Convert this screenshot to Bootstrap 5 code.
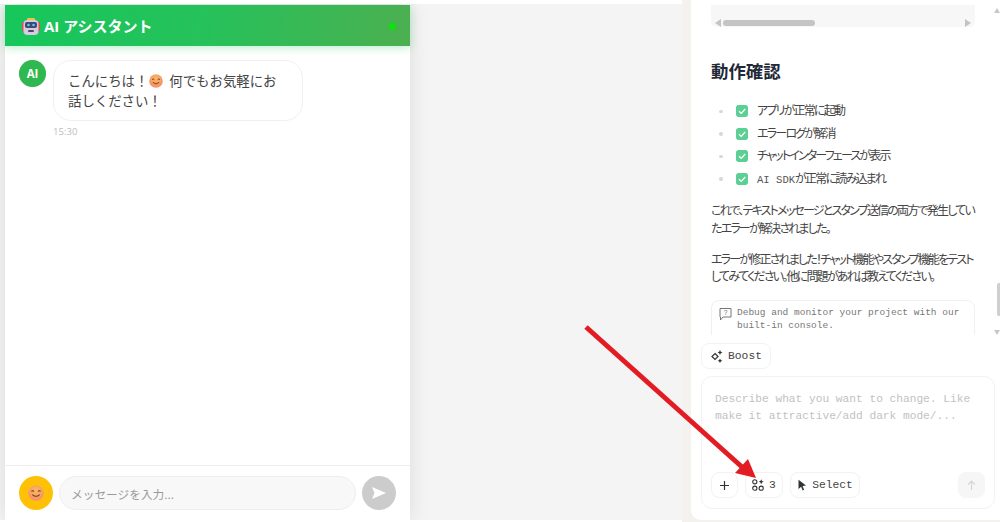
<!DOCTYPE html>
<html lang="ja">
<head>
<meta charset="utf-8">
<title>AI アシスタント</title>
<link href="https://cdn.jsdelivr.net/npm/bootstrap@5.3.0/dist/css/bootstrap.min.css" rel="stylesheet">
<style>
html,body{height:522px;overflow:hidden;background:#fff}
body{font-family:"Noto Sans CJK JP","Noto Sans",sans-serif;color:#333;position:relative}
.stage{height:522px}
.preview{width:682px;height:516px;margin-top:4px;background:#f4f4f4;padding:1px 0 0 5px;overflow:hidden}
.chat-panel{width:405px;height:515px;background:#fff;box-shadow:0 0 20px rgba(0,0,0,.1)}
.chat-head{height:41px;padding:2px 14px 0 17px;background:linear-gradient(100deg,#16c75c 0%,#26c15a 50%,#4caf50 100%);box-shadow:0 2px 8px rgba(40,200,100,.3);color:#fff}
.chat-title{font-family:"Open Sans","Noto Sans CJK JP",sans-serif;font-size:15px;font-weight:700;line-height:1;margin:0}
.status-dot{width:7px;height:7px;border-radius:50%;background:#0be30b}
.chat-body{padding:14px 14px 0;gap:7px}
.bot-avatar{width:27px;height:27px;border-radius:50%;background:#2eb84f;color:#fff;font:700 11.5px "Open Sans",sans-serif;box-shadow:0 0 1px rgba(0,0,0,.2)}
.bubble{width:250px;height:61px;padding:9px 14px;border:1px solid #f0f0f0;border-radius:18px;font-size:13.4px;line-height:20px;color:#444;background:#fff}
.bubble svg{vertical-align:-2px;margin:0 6px 0 1px}
.stamp{font:9.6px "Open Sans",sans-serif;color:#bdbdbd;margin-top:4px}
.chat-foot{height:55px;border-top:1px solid #eee;padding:10px 14px 0;gap:6px}
.emoji-btn,.send-btn{width:34px;height:34px;border-radius:50%;border:0;padding:0}
.emoji-btn{background:#ffc107}
.send-btn{background:#ccc}
.msg-input{height:34px;flex:1;border-radius:17px;border:1px solid #eee;background:#f8f8f8;padding:0 11px;font-size:11.7px;color:#999;box-shadow:none}
.msg-input::placeholder{color:#9a9a9a}
.side-wrap{width:318px;height:522px;background:#f3f2ee;padding-left:9px}
.side{width:309px;height:520px;background:#fff;border-radius:0 0 0 10px;position:relative}
.side-scroll{height:336px;overflow:hidden;padding:5px 25px 0 20px;font-size:12px;font-feature-settings:"palt";letter-spacing:-1.8px;color:#444}
.code-end{height:22px;background:#f7f7f7;border-radius:0 0 6px 6px;padding:14px 4px 0;gap:2px}
.bar-thumb{width:92px;height:6px;border-radius:3px;background:#c4c4c4}
.tri-l,.tri-r{width:0;height:0;border-top:4px solid transparent;border-bottom:4px solid transparent;margin-top:-1px}
.tri-l{border-right:6px solid #c4c4c4}
.tri-r{border-left:6px solid #c4c4c4}
.sect-title{font-size:17.4px;font-weight:700;color:#1f2937;line-height:24px;margin:32px 0 16px;letter-spacing:0;font-feature-settings:normal}
.check-list{margin:0 0 12px;padding-left:8px}
.check-list li{height:22.6px;line-height:22.6px;color:#444}
.check-list li::before{content:"";display:inline-block;width:3.5px;height:3.5px;border-radius:50%;background:#d5d9e0;margin-right:13.5px;vertical-align:2px}
.tick{width:12px;height:12px;border-radius:2px;margin-right:9px;vertical-align:-2px}
.mono-inline{font-family:"Liberation Mono",monospace;font-size:10.6px;letter-spacing:0;color:#555}
.para{line-height:17.7px;margin:0 0 13px}
.hint-box{border:1px solid #f0f0f0;border-radius:8px;padding:6px 7px;height:60px;margin-top:15px;gap:5px;font:9.5px/12.4px "Liberation Mono",monospace;letter-spacing:0;color:#777}
.composer{padding:8px 5px 11px 10px}
.chip{font:11.3px "Liberation Mono",monospace;color:#444;border:1px solid #f2f2f2;border-radius:8px;background:#fff;padding:0;height:26px;gap:5px}
.boost-chip{width:70px;margin-bottom:7px}
.compose-box{height:133px;border:1px solid #f2f2f2;border-radius:11px;padding:14px 9px 10px 9px}
.compose-text{height:95px;border:0;resize:none;padding:0 0 0 4px;width:100%;font:11.2px/17px "Liberation Mono",monospace;box-shadow:none;outline:0;background:transparent}
.compose-text::placeholder{color:#c2c2c2}
.chip-row{gap:7px}
.add-chip{width:27px}
.count-chip{width:38px}
.select-chip{width:70px}
.up-chip{width:27px;border:0;background:#f6f6f6}
.page-scroll-thumb{position:absolute;right:0;top:283px;width:3px;height:33px;background:#cfcfcf;border-radius:2px 0 0 2px}
.page-arrow{position:absolute;right:0;width:0;height:0;border-left:3px solid transparent;border-right:3px solid transparent}
.page-arrow.up{top:8px;border-bottom:5px solid #c8c8c8}
.page-arrow.down{top:330px;border-top:5px solid #c8c8c8}
.red-arrow{position:absolute;left:0;top:0;pointer-events:none}
</style>
</head>
<body>
<div class="stage d-flex">
  <div class="preview">
    <section class="chat-panel d-flex flex-column">
      <header class="chat-head d-flex align-items-center justify-content-between">
        <div class="d-flex align-items-center gap-1">
          <svg width="18" height="18" viewBox="0 0 18 18"><rect x="0" y="4" width="2" height="9" fill="#d9534f"/><rect x="16" y="4" width="2" height="9" fill="#d9534f"/><rect x="5" y="0" width="8" height="3" rx="1" fill="#f0c040"/><rect x="1.500" y="2" width="15" height="15" rx="4" fill="#d9c9e3"/><rect x="3" y="4" width="12" height="6" rx="2" fill="#3a4a70"/><circle cx="6.500" cy="7" r="1.300" fill="#5fc6f0"/><circle cx="11.500" cy="7" r="1.300" fill="#5fc6f0"/><rect x="6" y="12" width="6" height="2" rx="1" fill="#4a4a60"/></svg>
          <h1 class="chat-title">AI アシスタント</h1>
        </div>
        <span class="status-dot"></span>
      </header>
      <div class="chat-body flex-grow-1 d-flex">
        <div class="bot-avatar d-flex align-items-center justify-content-center flex-shrink-0">AI</div>
        <div>
          <div class="bubble">こんにちは！<svg width="14" height="14" viewBox="0 0 14 14"><defs><radialGradient id="f1" cx=".5" cy=".35" r=".7"><stop offset="0" stop-color="#fbb860"/><stop offset="1" stop-color="#f58a6a"/></radialGradient></defs><circle cx="7" cy="7" r="6.800" fill="url(#f1)"/><path d="M3 5.600q1.200-1.300 2.400 0M8.600 5.600q1.200-1.300 2.400 0M3.800 8.400q3.200 3 6.400 0" fill="none" stroke="#6b3a20" stroke-width=".9"/></svg>何でもお気軽にお<br>話しください！</div>
          <div class="stamp">15:30</div>
        </div>
      </div>
      <footer class="chat-foot d-flex">
        <button class="emoji-btn d-flex align-items-center justify-content-center" type="button" aria-label="スタンプ"><svg width="16" height="16" viewBox="0 0 14 14"><defs><radialGradient id="f2" cx=".5" cy=".35" r=".7"><stop offset="0" stop-color="#fbb860"/><stop offset="1" stop-color="#f58a6a"/></radialGradient></defs><circle cx="7" cy="7" r="6.800" fill="url(#f2)"/><path d="M3 5.600q1.200-1.300 2.400 0M8.600 5.600q1.200-1.300 2.400 0M3.800 8.400q3.200 3 6.400 0" fill="none" stroke="#6b3a20" stroke-width=".9"/></svg></button>
        <input class="msg-input form-control" type="text" placeholder="メッセージを入力...">
        <button class="send-btn d-flex align-items-center justify-content-center" type="button" aria-label="送信"><svg width="16" height="14" viewBox="0 0 16 14"><path d="M1 1l14 6-14 6 2.500-6z" fill="#fff"/></svg></button>
      </footer>
    </section>
  </div>
  <div class="side-wrap">
  <aside class="side d-flex flex-column">
    <div class="side-scroll">
      <div class="code-end d-flex align-items-center"><span class="tri-l"></span><span class="bar-thumb"></span><span class="ms-auto tri-r"></span></div>
      <h2 class="sect-title">動作確認</h2>
      <ul class="check-list list-unstyled">
        <li><svg class="tick" viewBox="0 0 12 12"><rect width="12" height="12" rx="2" fill="#5ccf94"/><path d="M3 6.200l2.200 2.200L9.200 4" fill="none" stroke="#fff" stroke-width="1.300"/></svg>アプリが正常に起動</li>
        <li><svg class="tick" viewBox="0 0 12 12"><rect width="12" height="12" rx="2" fill="#5ccf94"/><path d="M3 6.200l2.200 2.200L9.200 4" fill="none" stroke="#fff" stroke-width="1.300"/></svg>エラーログが解消</li>
        <li><svg class="tick" viewBox="0 0 12 12"><rect width="12" height="12" rx="2" fill="#5ccf94"/><path d="M3 6.200l2.200 2.200L9.200 4" fill="none" stroke="#fff" stroke-width="1.300"/></svg>チャットインターフェースが表示</li>
        <li><svg class="tick" viewBox="0 0 12 12"><rect width="12" height="12" rx="2" fill="#5ccf94"/><path d="M3 6.200l2.200 2.200L9.200 4" fill="none" stroke="#fff" stroke-width="1.300"/></svg><span class="mono-inline">AI SDK</span>が正常に読み込まれ</li>
      </ul>
      <p class="para">これで、テキストメッセージとスタンプ送信の両方で発生していたエラーが解決されました。</p>
      <p class="para">エラーが修正されました！チャット機能やスタンプ機能をテストしてみてください。他に問題があれば教えてください。</p>
      <div class="hint-box d-flex">
        <svg class="flex-shrink-0" width="13" height="14" viewBox="0 0 13 14"><path d="M1 1.500h11v8.500H4L1.500 13V10H1z" fill="none" stroke="#777"/><text x="6.500" y="8" font-size="7" text-anchor="middle" fill="#777" font-family="Liberation Mono">?</text></svg>
        <span>Debug and monitor your project with our built-in console.</span>
      </div>
    </div>
    <div class="composer">
      <button class="chip boost-chip d-flex align-items-center justify-content-center" type="button"><svg width="13" height="13" viewBox="0 0 13 13"><path d="M5 3.500L8 6.500 5 9.500 2 6.500z" fill="none" stroke="#333" stroke-width="1.200"/><path d="M10 0l.8 1.700 1.700.8-1.700.8L10 5l-.8-1.700-1.700-.8 1.700-.8zM10 8.500l.8 1.500 1.500.8-1.500.8L10 13l-.8-1.400-1.500-.8 1.500-.8z" fill="#333"/></svg>Boost</button>
      <div class="compose-box d-flex flex-column">
        <textarea class="compose-text" placeholder="Describe what you want to change. Like make it attractive/add dark mode/..." aria-label="prompt"></textarea>
        <div class="d-flex chip-row align-items-center">
          <button class="chip add-chip d-flex align-items-center justify-content-center" type="button" aria-label="add"><svg width="9" height="9" viewBox="0 0 9 9"><path d="M4.500 0v9M0 4.500h9" stroke="#333" stroke-width="1.200"/></svg></button>
          <button class="chip count-chip d-flex align-items-center justify-content-center" type="button"><svg width="12" height="12" viewBox="0 0 12 12"><g fill="none" stroke="#333" stroke-width="1.100"><circle cx="2.800" cy="2.800" r="2.100"/><circle cx="2.800" cy="9.200" r="2.100"/><circle cx="9.200" cy="9.200" r="2.100"/></g><path d="M9.200.3l.8 1.700 1.700.8-1.700.8-.8 1.700-.8-1.700-1.700-.8 1.700-.8z" fill="#333"/></svg>3</button>
          <button class="chip select-chip d-flex align-items-center justify-content-center" type="button"><svg width="10" height="12" viewBox="0 0 10 12"><path d="M1.500 .8L9 6.500 5.600 7l1.500 3.800-1.500.6L4.200 7.700 1.500 10z" fill="#333"/></svg>Select</button>
          <button class="chip up-chip ms-auto d-flex align-items-center justify-content-center" type="button" aria-label="send"><svg width="9" height="10" viewBox="0 0 9 10"><path d="M4.500 10V1M1 4.500l3.500-3.500 3.500 3.500" fill="none" stroke="#d5d5d5" stroke-width="1.100"/></svg></button>
        </div>
      </div>
    </div>
    <span class="page-arrow up"></span>
    <span class="page-scroll-thumb"></span>
    <span class="page-arrow down"></span>
  </aside>
  </div>
</div>
<svg class="red-arrow" width="1000" height="522" viewBox="0 0 1000 522"><path d="M586 327L742 467" stroke="#e31c23" stroke-width="5"/><path d="M756 478L735 473 748 459z" fill="#e31c23"/></svg>
<script src="https://cdn.jsdelivr.net/npm/bootstrap@5.3.0/dist/js/bootstrap.bundle.min.js"></script>
</body>
</html>
